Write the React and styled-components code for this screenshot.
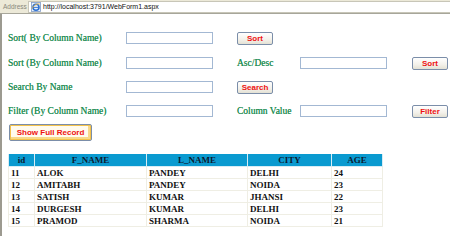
import React from 'react';
import styled, { createGlobalStyle } from 'styled-components';

const GlobalStyle = createGlobalStyle`
  html, body {
    margin: 0;
    padding: 0;
    background: #ffffff;
  }
  body {
    width: 450px;
    height: 236px;
    overflow: hidden;
  }
`;

const people = [
  { id: 11, first: 'ALOK', last: 'PANDEY', city: 'DELHI', age: 24 },
  { id: 12, first: 'AMITABH', last: 'PANDEY', city: 'NOIDA', age: 23 },
  { id: 13, first: 'SATISH', last: 'KUMAR', city: 'JHANSI', age: 22 },
  { id: 14, first: 'DURGESH', last: 'KUMAR', city: 'DELHI', age: 23 },
  { id: 15, first: 'PRAMOD', last: 'SHARMA', city: 'NOIDA', age: 21 },
];

const columns = [
  { title: 'id', width: 26 },
  { title: 'F_NAME', width: 112 },
  { title: 'L_NAME', width: 101 },
  { title: 'CITY', width: 84 },
  { title: 'AGE', width: 51 },
];

const IeIcon = () => (
  <svg width="10" height="10" viewBox="0 0 10 10">
    <rect x="0.5" y="0.5" width="9" height="9" fill="#e9f1fb" stroke="#7d98c4" strokeWidth="0.8" />
    <circle cx="5" cy="5.3" r="3" fill="none" stroke="#2a6fd1" strokeWidth="1.6" />
    <rect x="2.2" y="4.9" width="5.4" height="0.9" fill="#2a6fd1" />
    <path d="M1.2 6.5 C2.5 2.5 7.5 1.2 8.8 2.2" fill="none" stroke="#f0b030" strokeWidth="0.8" />
  </svg>
);

const App = () => {
  return (
    <>
      <GlobalStyle />
      <AddressBar>
        <AddressLabel>Address</AddressLabel>
        <AddressField>
          <IeIcon />
          <Url>http://localhost:3791/WebForm1.aspx</Url>
        </AddressField>
      </AddressBar>
      <Page>
        <FormGrid>
          <Label>Sort( By Column Name)</Label>
          <TextBox />
          <Button>Sort</Button>
          <span />
          <span />

          <Label>Sort (By Column Name)</Label>
          <TextBox />
          <Label>Asc/Desc</Label>
          <TextBox />
          <Button>Sort</Button>

          <Label>Search By Name</Label>
          <TextBox />
          <Button>Search</Button>
          <span />
          <span />

          <Label>Filter (By Column Name)</Label>
          <TextBox />
          <Label>Column Value</Label>
          <TextBox />
          <Button>Filter</Button>
        </FormGrid>

        <FullButton>Show Full Record</FullButton>

        <Grid>
          <colgroup>
            {columns.map((c) => (
              <col key={c.title} style={{ width: c.width }} />
            ))}
          </colgroup>
          <thead>
            <tr>
              {columns.map((c) => (
                <HeadCell key={c.title}>{c.title}</HeadCell>
              ))}
            </tr>
          </thead>
          <tbody>
            {people.map((p) => (
              <tr key={p.id}>
                <Cell>{p.id}</Cell>
                <Cell>{p.first}</Cell>
                <Cell>{p.last}</Cell>
                <Cell>{p.city}</Cell>
                <Cell>{p.age}</Cell>
              </tr>
            ))}
          </tbody>
        </Grid>
      </Page>
    </>
  );
};

//styled components
const AddressBar = styled.div`
  display: flex;
  align-items: center;
  height: 14px;
  background: #ece9d8;
  border-bottom: 1px solid #a7a69a;
  box-sizing: border-box;
`;

const AddressLabel = styled.span`
  font-family: "Liberation Sans", Arial, sans-serif;
  font-size: 6.5px;
  color: #8a887c;
  padding: 0 2px 0 3px;
  width: 23px;
  white-space: nowrap;
`;

const AddressField = styled.div`
  flex: 1;
  display: flex;
  align-items: center;
  gap: 2px;
  height: 12px;
  padding-left: 2px;
  background: #ffffff;
  border: 1px solid #c8c6b8;
  border-right: none;
  box-sizing: border-box;
`;

const Url = styled.span`
  font-family: "Liberation Sans", Arial, sans-serif;
  font-size: 7px;
  color: #111111;
`;

const Page = styled.div`
  border-left: 2px solid #9c9a90;
  padding: 11px 0 0 6px;
  height: 222px;
  box-sizing: border-box;
`;

const FormGrid = styled.div`
  display: grid;
  grid-template-columns: 118px 111px 63px 112px 36px;
  grid-template-rows: 26px 24px 24px 24px;
  align-items: center;
`;

const Label = styled.span`
  font-family: "Liberation Serif", "Times New Roman", serif;
  font-size: 9.5px;
  color: #2a9159;
  white-space: nowrap;
  text-shadow: 0 0 0.4px #2a9159;
`;

const TextBox = styled.input`
  width: 87px;
  height: 12px;
  box-sizing: border-box;
  border: 1px solid #a3b8d3;
  padding: 0;
  margin: 0;
  background: #ffffff;
`;

const Button = styled.button`
  width: 36px;
  height: 13px;
  padding: 0;
  margin: 0;
  box-sizing: border-box;
  border: 1px solid #7b8ea9;
  border-radius: 2px;
  background: linear-gradient(#ffffff, #f3f1ea 60%, #e4e1d4);
  font-family: "Liberation Sans", Arial, sans-serif;
  font-weight: bold;
  font-size: 8px;
  color: #ee1111;
  line-height: 11px;
`;

const FullButton = styled.button`
  display: block;
  width: 83px;
  height: 17px;
  margin: 1px 0 13px 1px;
  padding: 0;
  box-sizing: border-box;
  border: 1px solid #7b8ea9;
  border-radius: 2px;
  box-shadow: inset 0 0 0 1px #f4c24a, inset -1px -1px 0 2px #f8d98a;
  background: #fffbee;
  font-family: "Liberation Sans", Arial, sans-serif;
  font-weight: bold;
  font-size: 8px;
  color: #ee1111;
`;

const Grid = styled.table`
  border-collapse: collapse;
  table-layout: fixed;
  font-family: "Liberation Serif", "Times New Roman", serif;
  font-size: 9px;
  font-weight: bold;
  color: #111111;
`;

const HeadCell = styled.th`
  background: #0a9ad0;
  height: 12px;
  padding: 0;
  border: 1px solid #d7ecf5;
  border-top: none;
  font-weight: bold;
  color: #0c1a30;
  text-align: center;
  line-height: 10px;
`;

const Cell = styled.td`
  height: 11px;
  padding: 0 0 0 2px;
  border: 1px solid #efeee4;
  line-height: 10px;
  white-space: nowrap;
`;

export default App;
